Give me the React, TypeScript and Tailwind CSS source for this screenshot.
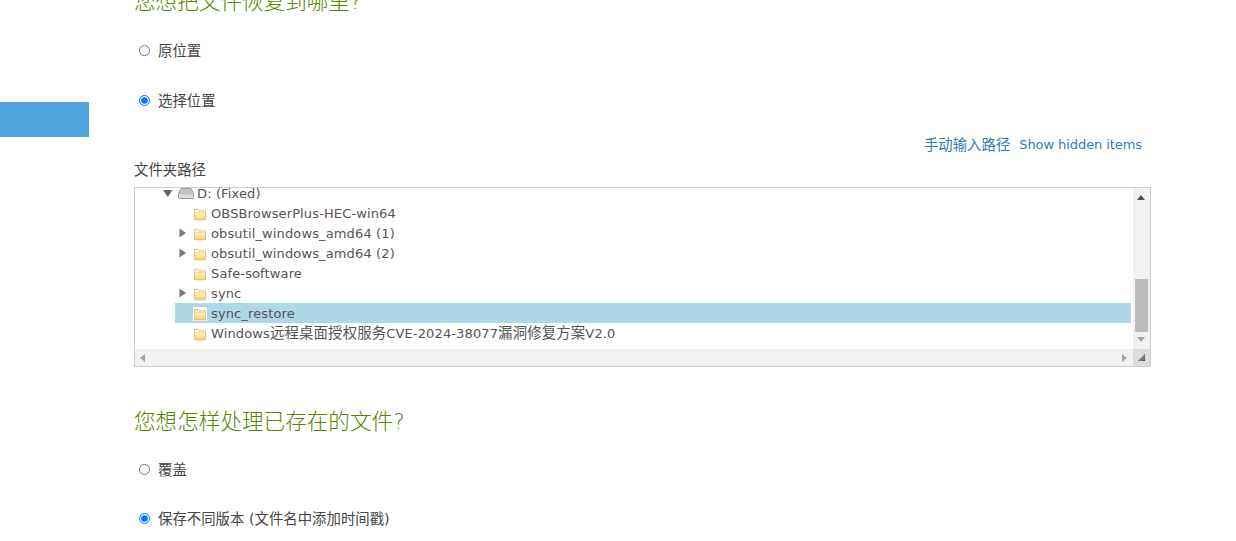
const sans = "font-['DejaVu_Sans','Noto_Sans_CJK_SC',sans-serif]";

function Folder() {
  return (
    <svg width="14" height="14" viewBox="0 0 14 14" className="shrink-0">
      <defs>
        <linearGradient id="fold" x1="0" y1="0" x2="0" y2="1">
          <stop offset="0" stopColor="#fffbe0" />
          <stop offset="0.45" stopColor="#fdeea8" />
          <stop offset="1" stopColor="#f6d565" />
        </linearGradient>
      </defs>
      <path d="M1.5 2.5h3.7l1 1.3h6.3v9h-11z" fill="url(#fold)" stroke="#e3bd83" strokeWidth="1" />
      <path d="M2.5 5.5h9" stroke="#f1d9a3" strokeWidth="1" />
    </svg>
  );
}

function Arrow({ open }: { open?: boolean }) {
  return (
    <svg width="10" height="10" viewBox="0 0 10 10" className="shrink-0">
      {open ? <path d="M0 2h9.5L4.8 9z" fill="#666" /> : <path d="M1.5 0.5 8 5l-6.5 4.5z" fill="#777" />}
    </svg>
  );
}

function Radio({ checked, label }: { checked?: boolean; label: string }) {
  return (
    <label className="flex items-center h-5 pl-[5px] gap-[8px] text-[14.4px] text-[#444]">
      <input type="radio" readOnly checked={!!checked} className="m-0 mb-[2px] w-[11px] h-[11px] accent-[#0075ff]" />
      <span className="mt-[2px]">{label}</span>
    </label>
  );
}

function Row({ label, arrow, selected }: { label: React.ReactNode; arrow?: boolean; selected?: boolean }) {
  return (
    <div className="flex h-5 items-center">
      <div className="w-[40px] shrink-0 flex justify-end">{arrow ? <div className="mr-[-13px] flex w-[10px] z-10"><Arrow /></div> : null}</div>
      <div className={`flex h-5 w-[956px] items-center relative ${selected ? "bg-[#add8e6]" : ""}`}>
        <div className={`absolute left-[18px] top-[4px] ${selected ? "bg-white" : ""}`}><Folder /></div>
        <span className="pl-[36px] pt-[2px] tracking-[0.13px] whitespace-nowrap">{label}</span>
      </div>
    </div>
  );
}

export default function App() {
  return (
    <div className={`${sans} h-[541px] w-[1236px] overflow-hidden flex bg-white text-[#444]`}>
      <div className="w-[89px] shrink-0 pt-[102px]">
        <div className="h-[35px] bg-[#4ea4dc]" />
      </div>
      <main className="ml-[45px] w-[1017px]">
        <h2 className="mt-[-11px] h-[25px] text-[21.6px] leading-[25px] font-light text-[#558500] whitespace-nowrap">您想把文件恢复到哪里?</h2>
        <div className="mt-[27px]"><Radio label="原位置" /></div>
        <div className="mt-[30px]"><Radio checked label="选择位置" /></div>
        <div className="mt-[24px] flex justify-end items-center gap-[9px] pr-[9px] leading-5 text-[#337ab7]">
          <span className="text-[14.4px]">手动输入路径</span>
          <span className="text-[13px] tracking-[-0.08px]">Show hidden items</span>
        </div>
        <div className="mt-[5px] text-[14.4px] leading-5 h-5">文件夹路径</div>
        <div className="mt-[7px] h-[180px] border border-[#ccc] flex flex-col text-[13px] text-[#555]">
          <div className="flex flex-1 min-h-0">
            <div className="flex-1 overflow-hidden">
              <div className="mt-[-5px]">
                <div className="flex h-5 items-center pl-[28px] gap-[5px]">
                  <Arrow open />
                  <svg width="16" height="12" viewBox="0 0 16 12">
                    <path d="M3 1.5h10l2.5 5v4a1 1 0 0 1-1 1h-13a1 1 0 0 1-1-1v-4z" fill="#c4c4c4" stroke="#989898" />
                    <rect x="1" y="7.5" width="14" height="3.5" fill="#dedede" />
                  </svg>
                  <span className="-ml-[2px] pt-[2px] tracking-[0.13px]">D: (Fixed)</span>
                </div>
                <Row label="OBSBrowserPlus-HEC-win64" />
                <Row arrow label="obsutil_windows_amd64 (1)" />
                <Row arrow label="obsutil_windows_amd64 (2)" />
                <Row label="Safe-software" />
                <Row arrow label="sync" />
                <Row selected label="sync_restore" />
                <Row label={<>Windows<span className="text-[14.4px] tracking-[0.15px]">远程桌面授权服务</span>CVE-2024-38077<span className="text-[14.4px] tracking-[0.15px]">漏洞修复方案</span>V2.0</>} />
              </div>
            </div>
            <div className="w-[17px] bg-[#f1f1f1] flex flex-col items-center">
              <svg width="9" height="5" viewBox="0 0 9 5" className="mt-[7px]"><path d="M0 5h8L4 0z" fill="#505050" /></svg>
              <div className="mt-[79px] h-[53px] w-[13px] bg-[#bcbcbc]" />
              <svg width="9" height="5" viewBox="0 0 9 5" className="mt-[5px]"><path d="M0 0h8L4 5z" fill="#a3a3a3" /></svg>
            </div>
          </div>
          <div className="h-[17px] bg-[#f1f1f1] flex items-center">
            <svg width="5" height="8" viewBox="0 0 5 8" className="ml-[5px]"><path d="M5 0v8L0 4z" fill="#a3a3a3" /></svg>
            <svg width="5" height="8" viewBox="0 0 5 8" className="ml-auto mr-[6px]"><path d="M0 0v8l5-4z" fill="#a3a3a3" /></svg>
            <div className="w-[17px] h-[17px] bg-[#dcdcdc] flex items-center justify-center">
              <svg width="9" height="9" viewBox="0 0 9 9"><path d="M8 1v7H1z" fill="#555" /><path d="M4.5 8 8 4.5M2.5 8 8 2.5" stroke="#bbb" strokeWidth="0.7" /></svg>
            </div>
          </div>
        </div>
        <h2 className="mt-[42px] h-[26px] text-[21.6px] leading-[26px] font-light text-[#558500] whitespace-nowrap">您想怎样处理已存在的文件?</h2>
        <div className="mt-[25px]"><Radio label="覆盖" /></div>
        <div className="mt-[29px]"><Radio checked label="保存不同版本 (文件名中添加时间戳)" /></div>
      </main>
    </div>
  );
}
